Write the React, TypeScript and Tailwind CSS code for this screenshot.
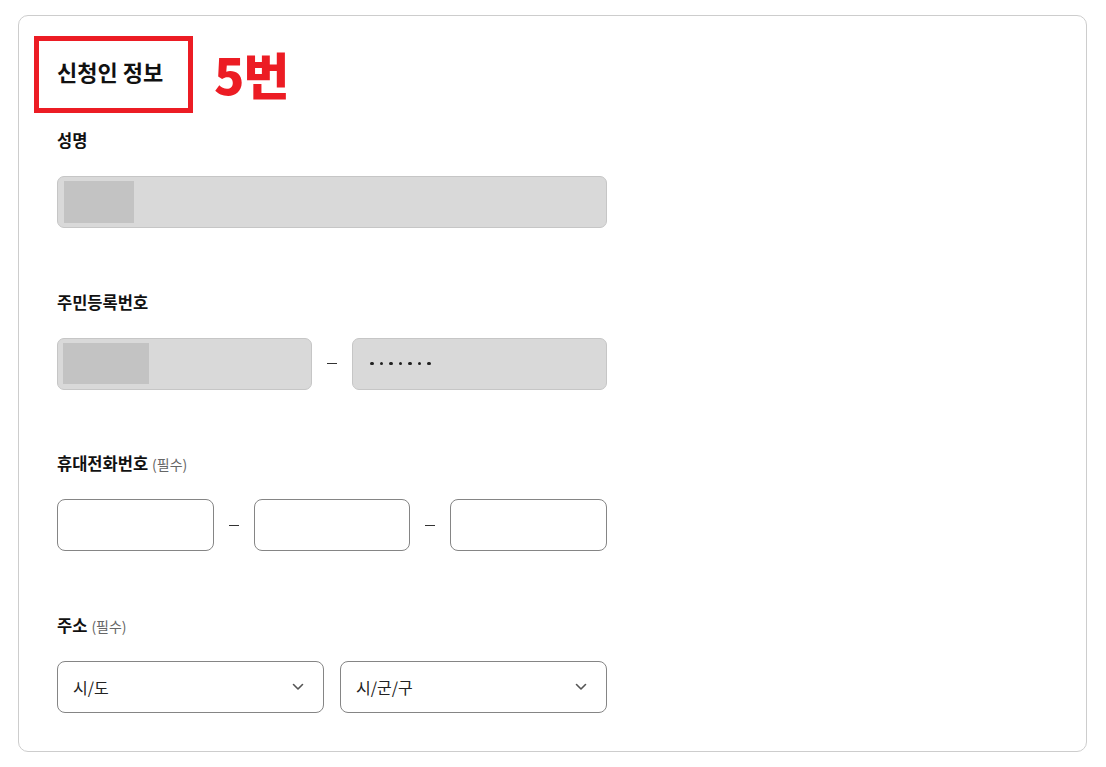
import React from "react";

const font = { fontFamily: '"Noto Sans CJK KR", "Noto Sans", sans-serif' };

function Label({ text, required }: { text: string; required?: boolean }) {
  return (
    <div className="flex items-baseline h-[22px] leading-[22px]">
      <span className="text-[16.5px] font-bold text-[#111]">{text}</span>
      {required && <span className="ml-[4px] text-[14px] text-[#666]">(필수)</span>}
    </div>
  );
}

function Dash() {
  return (
    <div className="w-[40px] flex items-center justify-center shrink-0">
      <div className="w-[10px] h-px bg-[#333]" />
    </div>
  );
}

function Chevron() {
  return (
    <svg width="12" height="8" viewBox="0 0 12 8" fill="none">
      <path d="M1.5 1.5 L6 6 L10.5 1.5" stroke="#555" strokeWidth="1.6" strokeLinecap="round" strokeLinejoin="round" />
    </svg>
  );
}

function Select({ text }: { text: string }) {
  return (
    <div className="w-[267px] h-[52px] rounded-[8px] border border-[#858585] bg-white flex items-center justify-between pl-[15px] pr-[19px]">
      <span className="text-[16px] text-[#222]">{text}</span>
      <Chevron />
    </div>
  );
}

export default function App() {
  return (
    <div className="w-[1106px] h-[767px] bg-white pt-[15px] pl-[18px]" style={font}>
      <div className="w-[1069px] h-[737px] border border-[#cdcdcd] rounded-[10px] px-[15px] pt-[20px]">
        <div className="flex items-center">
          <div className="w-[159px] h-[77px] border-[5px] border-[#ec1c24] flex items-center pl-[18px] pb-[6px]">
            <span className="text-[22px] font-bold text-[#111]">신청인 정보</span>
          </div>
          <span className="ml-[21px] text-[50px] leading-none font-black text-[#ec1c24] -mt-[4px] tracking-[-1px]">5번</span>
        </div>

        <div className="pl-[23px] mt-[16px] w-[573px] flex flex-col gap-[62.67px]">
          <div className="flex flex-col gap-[25px]">
            <Label text="성명" />
            <div className="w-[550px] h-[52px] rounded-[7px] border border-[#c6c6c6] bg-[#d9d9d9] flex items-center pl-[6px]">
              <div className="w-[70px] h-[42px] bg-[#c3c3c3]" />
            </div>
          </div>

          <div className="flex flex-col gap-[25px]">
            <Label text="주민등록번호" />
            <div className="flex w-[550px]">
              <div className="w-[255px] shrink-0 h-[52px] rounded-[7px] border border-[#c6c6c6] bg-[#d9d9d9] flex items-center pl-[5px]">
                <div className="w-[86px] h-[41px] bg-[#c3c3c3]" />
              </div>
              <Dash />
              <div className="w-[255px] shrink-0 h-[52px] rounded-[7px] border border-[#c6c6c6] bg-[#d9d9d9] flex items-center pl-[17px] gap-[6px]">
                {[0, 1, 2, 3, 4, 5, 6].map((i) => (
                  <div key={i} className="w-[3.5px] h-[3.5px] rounded-full bg-[#222]" />
                ))}
              </div>
            </div>
          </div>

          <div className="flex flex-col gap-[25px]">
            <Label text="휴대전화번호" required />
            <div className="flex w-[550px]">
              <div className="w-[157px] shrink-0 h-[52px] rounded-[8px] border border-[#858585] bg-white" />
              <Dash />
              <div className="w-[156px] shrink-0 h-[52px] rounded-[8px] border border-[#858585] bg-white" />
              <Dash />
              <div className="w-[157px] shrink-0 h-[52px] rounded-[8px] border border-[#858585] bg-white" />
            </div>
          </div>

          <div className="flex flex-col gap-[25px]">
            <Label text="주소" required />
            <div className="flex gap-[16px] w-[550px]">
              <Select text="시/도" />
              <Select text="시/군/구" />
            </div>
          </div>
        </div>
      </div>
    </div>
  );
}
